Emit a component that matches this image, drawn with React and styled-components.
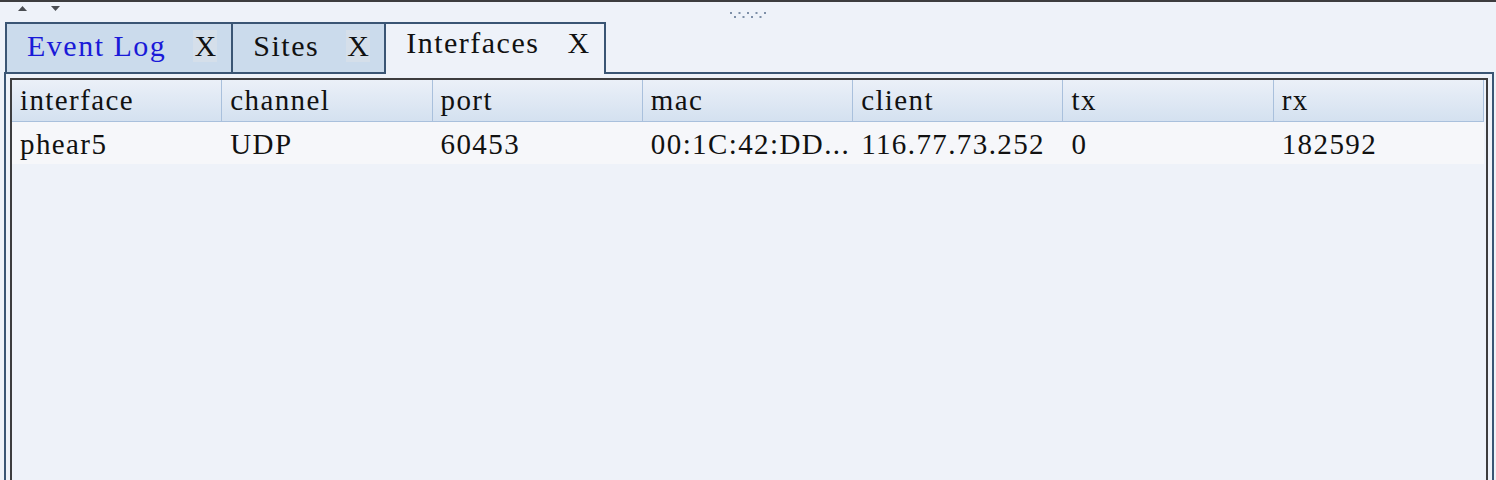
import React from "react";
import styled, { createGlobalStyle } from "styled-components";

const Global = createGlobalStyle`
  html, body { margin: 0; padding: 0; background: #eef2f9; }
  body { font-family: "Liberation Serif", "Times New Roman", serif; color: #111; }
  #root { width: 1496px; height: 480px; overflow: hidden; }
`;

const Page = styled.div`
  width: 1496px;
  height: 480px;
  display: flex;
  flex-direction: column;
  background: #eef2f9;
  overflow: hidden;
`;

const TopBar = styled.div`
  height: 20px;
  flex: none;
  border-top: 2px solid #3d3d3f;
  display: grid;
  grid-template-columns: 1fr auto 1fr;
  align-items: start;
`;

const Arrows = styled.div`
  display: flex;
  gap: 24px;
  padding: 4px 0 0 18px;
`;

const Grip = styled.div`
  padding-top: 3px;
`;

const TabStrip = styled.div`
  height: 50px;
  flex: none;
  display: flex;
  align-items: flex-start;
  padding-left: 5px;
  position: relative;
  z-index: 2;
`;

const Tab = styled.div`
  display: flex;
  align-items: center;
  gap: 27px;
  padding: 0 14px ${(p) => (p.$active ? 12 : 4)}px 20px;
  height: ${(p) => (p.$active ? 52 : 50)}px;
  box-sizing: border-box;
  border: 2px solid #3a5574;
  border-bottom: none;
  margin-left: ${(p) => (p.$first ? 0 : -2)}px;
  background: ${(p) => (p.$active ? "#eef2f9" : "#cbdbec")};
  font-size: 30px;
  line-height: 30px;
  letter-spacing: 1.5px;
  white-space: nowrap;
`;

const TabLabel = styled.span`
  color: ${(p) => (p.$alert ? "#1a1ad8" : "#111")};
`;

const Close = styled.span`
  display: inline-flex;
  align-items: center;
  justify-content: center;
  width: 24px;
  height: 32px;
  letter-spacing: 0;
  background: ${(p) => (p.$active ? "transparent" : "#d5dfea")};
  color: #111;
`;

const Panel = styled.div`
  flex: 1;
  margin: 0 2px 0 4px;
  border: 2px solid #3a5574;
  border-bottom: none;
  padding: 4px 4px 0 4px;
  display: flex;
  flex-direction: column;
  min-height: 0;
`;

const Table = styled.div`
  flex: 1;
  border: 2px solid #3d3d3f;
  border-bottom: none;
  background: #eef2f9;
  display: flex;
  flex-direction: column;
`;

const Row = styled.div`
  display: grid;
  grid-template-columns: repeat(7, 1fr);
  margin-right: 2px;
`;

const HeaderRow = styled(Row)`
  height: 41px;
  background: linear-gradient(#ebf0f8, #d4e1f0);
  border-bottom: 1px solid #a9c0dc;
`;

const DataRow = styled(Row)`
  height: 42px;
  background: #f6f7fa;
`;

const HeadCell = styled.div`
  border-right: 1px solid #a9c0dc;
  padding: 5px 0 0 8px;
  font-size: 29px;
  line-height: 30px;
  letter-spacing: 1.4px;
  white-space: nowrap;
  overflow: hidden;
`;

const Cell = styled.div`
  padding: 7px 0 0 8px;
  font-size: 29px;
  line-height: 30px;
  letter-spacing: 1.4px;
  white-space: nowrap;
  overflow: hidden;
`;

const columns = ["interface", "channel", "port", "mac", "client", "tx", "rx"];
const rows = [["phear5", "UDP", "60453", "00:1C:42:DD...", "116.77.73.252", "0", "182592"]];

const tabs = [
  { label: "Event Log", alert: true },
  { label: "Sites" },
  { label: "Interfaces", active: true },
];

function UpArrow() {
  return (
    <svg width="9" height="5" viewBox="0 0 9 5">
      <path d="M0 5 L4.5 0 L9 5 Z" fill="#4a4d52" />
    </svg>
  );
}

function DownArrow() {
  return (
    <svg width="9" height="5" viewBox="0 0 9 5">
      <path d="M0 0 L9 0 L4.5 5 Z" fill="#4a4d52" />
    </svg>
  );
}

function GripDots() {
  const top = [0, 8.5, 17, 25.5, 34];
  const bottom = [4, 12.5, 21, 29.5];
  return (
    <svg width="36" height="9" viewBox="0 0 36 9">
      {top.map((x) => (
        <rect key={"t" + x} x={x} y={2} width="2" height="2" fill="#7d8fa8" />
      ))}
      {bottom.map((x) => (
        <rect key={"b" + x} x={x} y={6} width="2" height="2" fill="#7d8fa8" />
      ))}
    </svg>
  );
}

export default function App() {
  return (
    <>
      <Global />
      <Page>
        <TopBar>
          <Arrows>
            <UpArrow />
            <DownArrow />
          </Arrows>
          <Grip>
            <GripDots />
          </Grip>
          <div />
        </TopBar>
        <TabStrip>
          {tabs.map((t, i) => (
            <Tab key={t.label} $active={t.active} $first={i === 0}>
              <TabLabel $alert={t.alert}>{t.label}</TabLabel>
              <Close $active={t.active}>X</Close>
            </Tab>
          ))}
        </TabStrip>
        <Panel>
          <Table>
            <HeaderRow>
              {columns.map((c) => (
                <HeadCell key={c}>{c}</HeadCell>
              ))}
            </HeaderRow>
            {rows.map((r, i) => (
              <DataRow key={i}>
                {r.map((v, j) => (
                  <Cell key={j}>{v}</Cell>
                ))}
              </DataRow>
            ))}
          </Table>
        </Panel>
      </Page>
    </>
  );
}
